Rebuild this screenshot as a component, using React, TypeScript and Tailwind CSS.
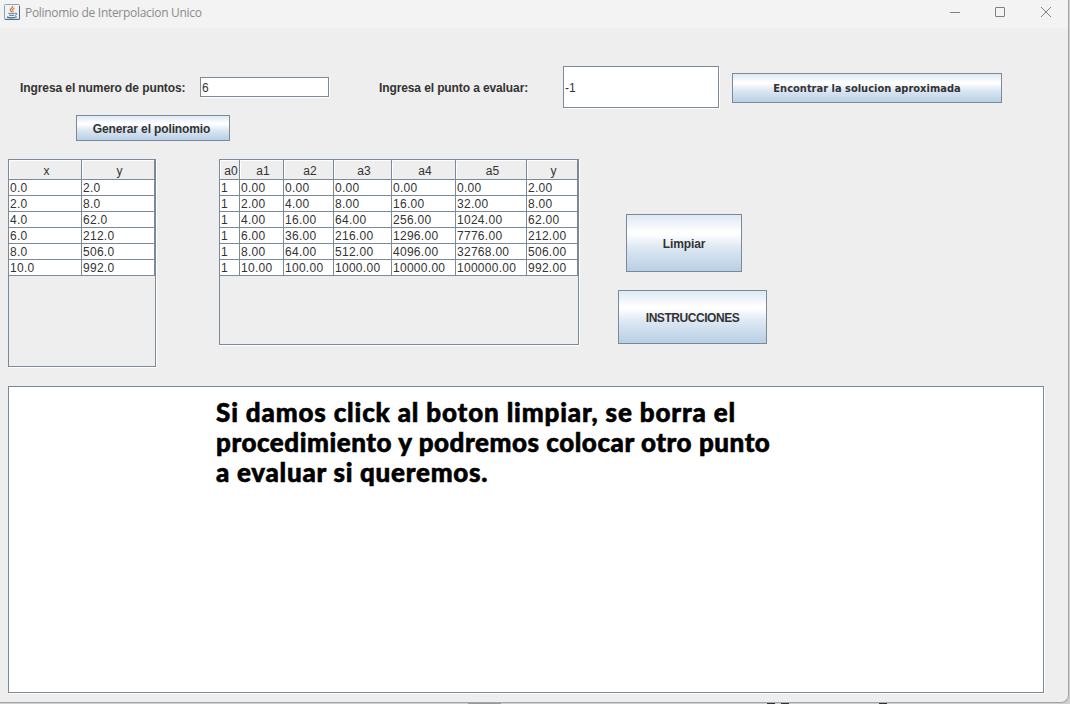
import React from "react";

type Column = { name: string; width: string };

const pointColumns: Column[] = [
  { name: "x", width: "w-[73px]" },
  { name: "y", width: "w-[73px]" },
];

const pointRows = [
  ["0.0", "2.0"],
  ["2.0", "8.0"],
  ["4.0", "62.0"],
  ["6.0", "212.0"],
  ["8.0", "506.0"],
  ["10.0", "992.0"],
];

const matrixColumns: Column[] = [
  { name: "a0", width: "w-[20px]" },
  { name: "a1", width: "w-[44px]" },
  { name: "a2", width: "w-[50px]" },
  { name: "a3", width: "w-[58px]" },
  { name: "a4", width: "w-[64px]" },
  { name: "a5", width: "w-[71px]" },
  { name: "y", width: "w-[51px]" },
];

const matrixRows = [
  ["1", "0.00", "0.00", "0.00", "0.00", "0.00", "2.00"],
  ["1", "2.00", "4.00", "8.00", "16.00", "32.00", "8.00"],
  ["1", "4.00", "16.00", "64.00", "256.00", "1024.00", "62.00"],
  ["1", "6.00", "36.00", "216.00", "1296.00", "7776.00", "212.00"],
  ["1", "8.00", "64.00", "512.00", "4096.00", "32768.00", "506.00"],
  ["1", "10.00", "100.00", "1000.00", "10000.00", "100000.00", "992.00"],
];

function Table({ columns, rows, className }: { columns: Column[]; rows: string[][]; className: string }) {
  return (
    <div className={`shrink-0 border border-[#7a8a99] shadow-[1px_1px_0_#ffffff] ${className}`}>
      <div className="flex">
        {columns.map((c) => (
          <div
            key={c.name}
            className={`${c.width} h-5 shrink-0 border-r border-b border-[#7a8a99] pl-[3px] text-center text-[12px] leading-[23px] tracking-[0.2px] whitespace-nowrap shadow-[inset_1px_1px_0_#ffffff]`}
          >
            {c.name}
          </div>
        ))}
      </div>
      {rows.map((row, i) => (
        <div key={i} className="flex">
          {row.map((value, j) => (
            <div
              key={j}
              className={`${columns[j].width} h-4 shrink-0 border-r border-b border-[#7a8a99] bg-white pl-px text-[12px] leading-[17px] tracking-[0.28px] whitespace-nowrap`}
            >
              {value}
            </div>
          ))}
        </div>
      ))}
    </div>
  );
}

function Button({ children, className }: { children: React.ReactNode; className: string }) {
  return (
    <button
      className={`flex shrink-0 items-center justify-center border border-[#7a8a99] bg-[linear-gradient(to_bottom,#dde8f3_0%,#ffffff_30%,#ffffff_34%,#dde8f3_58%,#b8cfe5_100%)] pt-[2px] text-[12px] font-bold whitespace-nowrap ${className}`}
    >
      {children}
    </button>
  );
}

function JavaIcon() {
  return (
    <svg width="16" height="16" viewBox="0 0 16 16" fill="none" className="shrink-0">
      <rect x="0.5" y="0.5" width="15" height="15" rx="1" fill="#eef3f7" stroke="#8ba1b4" />
      <path d="M1 15.300h14.500M15.500 2v13" stroke="#47657f" />
      <path d="M8.600 2c1 2-3 2.600-2.200 4.300.4.800 1.200 1.200 1.400 2" stroke="#e0752d" strokeWidth="1.400" />
      <path d="M10.600 4c-2.300 1.100-2.200 2-1.600 2.800.4.600 0 1.100-.5 1.600" stroke="#e58a4a" strokeWidth="1.200" />
      <path d="M4.300 9.300c1.800.6 4.500.6 6.300 0M5 11.100c1.600.6 3.700.6 5.200 0M11 9.200c2.500-.6 2.400 1.500 0 2.300" stroke="#446c91" strokeWidth="0.900" />
      <path d="M3 12.900c2.500 1.100 7 1 9.800-.1" stroke="#446c91" strokeWidth="1.200" />
    </svg>
  );
}

export default function App() {
  return (
    <div className="h-[704px] w-[1070px] overflow-hidden bg-[#cfcfcf] font-['Liberation_Sans',Arial,sans-serif] text-[#333333]">
      <div className="flex h-[703px] w-[1069px] flex-col rounded-br-lg border-r border-b border-[#a5a5a5] bg-[#eeeeee]">
        <header className="flex h-7 shrink-0 items-center bg-[#f3f3f3] pr-[15px] pb-1 pl-1">
          <JavaIcon />
          <h1 className="ml-[5px] pt-[2px] font-['Open_Sans','Noto_Sans',sans-serif] text-[12px] leading-4 tracking-[-0.3px] text-[#8b8b8b]">
            Polinomio de Interpolacion Unico
          </h1>
          <svg width="104" height="12" viewBox="0 0 104 12" fill="none" stroke="#7f7f7f" className="ml-auto">
            <path d="M1 6.500h10" />
            <rect x="46.500" y="1.500" width="9" height="9" rx="0.500" />
            <path d="M92 1l10 10M102 1L92 11" />
          </svg>
        </header>

        <main className="flex flex-col pt-[38px] pl-2">
          <div className="flex h-[42px] items-center pl-3 text-[12px]">
            <label className="w-[180px] pt-[2px] font-bold tracking-[-0.09px]">Ingresa el numero de puntos:</label>
            <div className="h-5 w-[129px] border border-[#7a8a99] bg-white pl-px leading-5 shadow-[1px_1px_0_#ffffff]">6</div>
            <label className="ml-[50px] w-[184px] pt-[2px] font-bold tracking-[-0.11px]">Ingresa el punto a evaluar:</label>
            <div className="flex h-[42px] w-[156px] items-center border border-[#7a8a99] bg-white pt-[2px] pl-px shadow-[1px_1px_0_#ffffff]">-1</div>
            <Button className="mt-[2px] ml-[13px] h-[30px] w-[270px] font-['DejaVu_Sans_Condensed','DejaVu_Sans',sans-serif]">
              <span className="text-[11px]">Encontrar la solucion aproximada</span>
            </Button>
          </div>

          <Button className="mt-[7px] ml-[68px] h-[26px] w-[154px] pr-[3px]">
            <span className="tracking-[-0.13px]">Generar el polinomio</span>
          </Button>

          <div className="mt-[18px] flex h-[208px] items-start">
            <Table columns={pointColumns} rows={pointRows} className="h-[208px] w-[148px]" />
            <Table columns={matrixColumns} rows={matrixRows} className="ml-[63px] h-[186px] w-[360px]" />
            <div className="ml-[39px] flex flex-col gap-[18px] pt-[55px]">
              <Button className="ml-2 h-[58px] w-[116px]">
                <span className="tracking-[-0.1px]">Limpiar</span>
              </Button>
              <Button className="h-[54px] w-[149px]">
                <span className="tracking-[-0.45px]">INSTRUCCIONES</span>
              </Button>
            </div>
          </div>

          <section className="mt-[19px] h-[307px] w-[1036px] border border-[#7a8a99] bg-white pt-[10px] pl-[207px] font-['Lato',sans-serif] text-[26px] leading-[30px] font-black whitespace-nowrap text-black shadow-[1px_1px_0_#ffffff] [-webkit-text-stroke:0.6px_#000000]">
            <p className="tracking-[0.85px]">Si damos click al boton limpiar, se borra el</p>
            <p className="tracking-[0.54px]">procedimiento y podremos colocar otro punto</p>
            <p className="tracking-[0.74px]">a evaluar si queremos.</p>
          </section>
        </main>
      </div>
      <div className="flex h-px">
        <div className="ml-[468px] h-px w-[33px] bg-[#999999]" />
        <div className="ml-[266px] h-px w-2 bg-[#333333]" />
        <div className="ml-[6px] h-px w-2 bg-[#333333]" />
        <div className="ml-[90px] h-px w-2 bg-[#333333]" />
      </div>
    </div>
  );
}
